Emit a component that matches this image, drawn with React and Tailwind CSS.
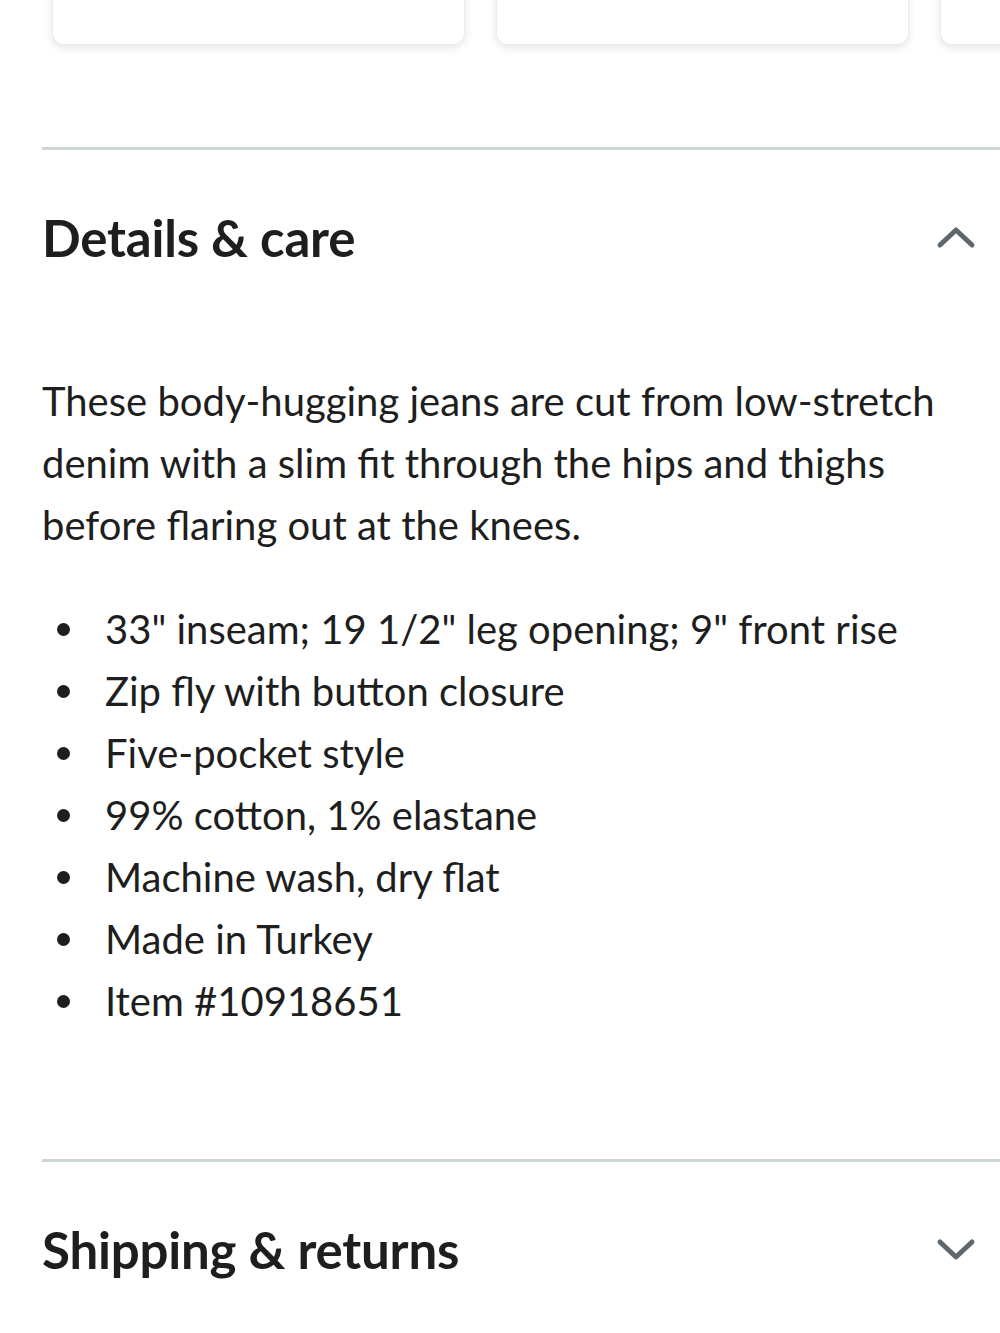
import React from "react";

function Chevron({ up }) {
  return (
    <svg width="40" height="24" viewBox="0 0 40 24" fill="none" className="shrink-0">
      <path
        d={up ? "M4 20 L20 5 L36 20" : "M4 5 L20 20 L36 5"}
        stroke="#5d676c"
        strokeWidth="5"
        strokeLinecap="round"
        strokeLinejoin="round"
      />
    </svg>
  );
}

export default function App() {
  const bullets = [
    "33\" inseam; 19 1/2\" leg opening; 9\" front rise",
    "Zip fly with button closure",
    "Five-pocket style",
    "99% cotton, 1% elastane",
    "Machine wash, dry flat",
    "Made in Turkey",
    "Item #10918651",
  ];
  return (
    <div
      className="w-[1000px] h-[1333px] bg-white overflow-hidden text-[#1e1e1e]"
      style={{ fontFamily: "Lato, 'Noto Sans', sans-serif" }}
    >
      {/* cards row */}
      <div className="flex gap-[31px] pl-[52px] h-[44px] overflow-visible">
        <div className="shrink-0 w-[411px] h-[44px] -mt-[10px] pt-[10px] box-content bg-white rounded-b-[12px] shadow-[0_3px_8px_rgba(0,0,0,0.10)] border border-t-0 border-[#ececec]" />
        <div className="shrink-0 w-[411px] h-[44px] -mt-[10px] pt-[10px] box-content bg-white rounded-b-[12px] shadow-[0_3px_8px_rgba(0,0,0,0.10)] border border-t-0 border-[#ececec]" />
        <div className="shrink-0 w-[411px] h-[44px] -mt-[10px] pt-[10px] box-content bg-white rounded-b-[12px] shadow-[0_3px_8px_rgba(0,0,0,0.10)] border border-t-0 border-[#ececec]" />
      </div>

      <div className="pl-[42px]">
        <div className="mt-[103px] h-[3px] bg-[#cfd6d6]" />

        <div className="flex items-center justify-between pr-[24px] h-[180px] -mt-[1px] pb-[4px]">
          <h2 className="text-[51px] font-bold leading-none tracking-[-0.2px]">Details &amp; care</h2>
          <Chevron up />
        </div>

        <div className="pr-[30px]">
          <p className="text-[40px] leading-[62px] mt-[41px]">
            These body-hugging jeans are cut from low-stretch denim with a slim fit through the hips and thighs before flaring out at the knees.
          </p>
          <ul className="mt-[42px]">
            {bullets.map((b) => (
              <li key={b} className="flex items-center text-[40px] leading-[62px]">
                <span className="w-[13px] h-[13px] rounded-full bg-[#1e1e1e] ml-[15px] mr-[35px] shrink-0" />
                <span>{b}</span>
              </li>
            ))}
          </ul>
        </div>

        <div className="mt-[127px] h-[3px] bg-[#cfd6d6]" />

        <div className="flex items-center justify-between pr-[24px] h-[180px] pb-[6px]">
          <h2 className="text-[51px] font-bold leading-none tracking-[-0.2px]">Shipping &amp; returns</h2>
          <Chevron />
        </div>
      </div>
    </div>
  );
}
